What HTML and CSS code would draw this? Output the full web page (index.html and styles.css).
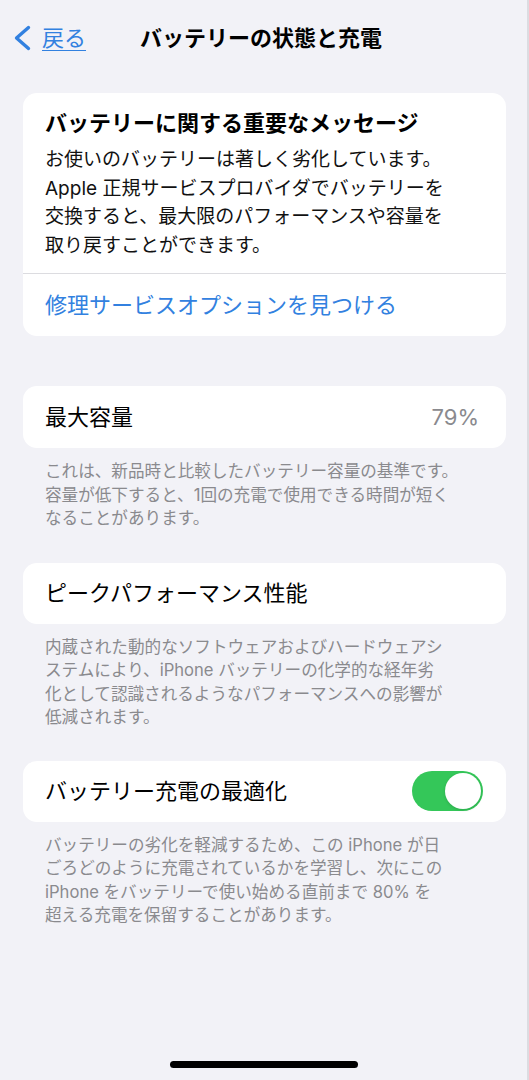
FILE: index.html
```html
<!DOCTYPE html>
<html lang="ja">
<head>
<meta charset="utf-8">
<title>バッテリーの状態と充電</title>
<link rel="stylesheet" href="styles.css">
</head>
<body>
<div class="screen">
  <header class="nav">
    <a class="back" href="#">
      <svg class="chev" viewBox="0 0 18 26" width="18" height="26" aria-hidden="true">
        <path d="M15.5 2.5 L3.5 13 L15.5 23.5" fill="none" stroke="currentColor" stroke-width="3.4" stroke-linecap="round" stroke-linejoin="round"/>
      </svg>
      <span class="back-text">戻る</span>
    </a>
    <h1 class="nav-title">バッテリーの状態と充電</h1>
  </header>

  <main class="content">
    <section class="card card-msg">
      <div class="msg-body">
        <h2 class="msg-title">バッテリーに関する重要なメッセージ</h2>
        <p class="msg-text">お使いのバッテリーは著しく劣化しています。<br>Apple 正規サービスプロバイダでバッテリーを<br>交換すると、最大限のパフォーマンスや容量を<br>取り戻すことができます。</p>
      </div>
      <div class="msg-link-row">
        <a class="msg-link" href="#">修理サービスオプションを見つける</a>
      </div>
    </section>

    <section class="card card-row card-first">
      <span class="row-label">最大容量</span>
      <span class="row-value">79%</span>
    </section>
    <p class="footnote">これは、新品時と比較したバッテリー容量の基準です。<br>容量が低下すると、1回の充電で使用できる時間が短く<br>なることがあります。</p>

    <section class="card card-row card-second">
      <span class="row-label">ピークパフォーマンス性能</span>
    </section>
    <p class="footnote">内蔵された動的なソフトウェアおよびハードウェアシ<br>ステムにより、iPhone バッテリーの化学的な経年劣<br>化として認識されるようなパフォーマンスへの影響が<br>低減されます。</p>

    <section class="card card-row card-third">
      <span class="row-label">バッテリー充電の最適化</span>
      <span class="toggle on" role="switch" aria-checked="true"><span class="knob"></span></span>
    </section>
    <p class="footnote">バッテリーの劣化を軽減するため、この iPhone が日<br>ごろどのように充電されているかを学習し、次にこの<br>iPhone をバッテリーで使い始める直前まで 80% を<br>超える充電を保留することがあります。</p>
  </main>

  <div class="home-indicator"></div>
</div>
</body>
</html>
```

FILE: styles.css
```css
* { box-sizing: border-box; }

html, body {
  margin: 0;
  padding: 0;
}

body {
  background: #f2f2f7;
  font-family: "Inter", "Noto Sans CJK JP", sans-serif;
  color: #000;
  -webkit-font-smoothing: antialiased;
}

.screen {
  position: relative;
  width: 529px;
  height: 1080px;
  overflow: hidden;
  background: #f2f2f7;
  box-shadow: inset -2px 0 0 #dcdce1;
}

/* Navigation bar */
.nav {
  display: flex;
  align-items: center;
  height: 48px;
  margin-top: 14px;
  padding-left: 13px;
}

.back {
  display: flex;
  align-items: center;
  gap: 11px;
  color: #3281e0;
  text-decoration: none;
}

.chev {
  display: block;
  color: #3281e0;
}

.back-text {
  font-size: 22px;
  line-height: 28px;
  text-decoration: underline;
  text-decoration-thickness: 1px;
  text-underline-offset: 4px;
}

.nav-title {
  margin: 0 0 0 54px;
  font-size: 22px;
  line-height: 28px;
  font-weight: 700;
  color: #000;
}

/* Content */
.content {
  padding: 0 23px 0 23px;
  display: flex;
  flex-direction: column;
}

.card {
  background: #fff;
  border-radius: 14px;
}

.card-msg {
  margin-top: 31px;
}

.msg-body {
  padding: 16px 22px 13px 22px;
  border-bottom: 1px solid #dcdce0;
}

.msg-title {
  margin: 0;
  font-size: 22px;
  line-height: 28px;
  font-weight: 700;
  white-space: nowrap;
}

.msg-text {
  margin: 9px 0 0 0;
  font-size: 19px;
  line-height: 28.5px;
  white-space: nowrap;
  color: #111;
}

.msg-link-row {
  height: 62px;
  display: flex;
  align-items: center;
  padding-left: 22px;
}

.msg-link {
  color: #3281e0;
  text-decoration: none;
  font-size: 22px;
  line-height: 28px;
}

.card-row {
  height: 61px;
  display: flex;
  align-items: center;
  justify-content: space-between;
  padding: 0 23px 0 22px;
}

.card-first { margin-top: 50px; height: 62px; }
.card-second { margin-top: 32px; }
.card-third { margin-top: 31px; }

.row-label {
  font-size: 22px;
  line-height: 28px;
  white-space: nowrap;
}

.row-value {
  font-size: 22px;
  line-height: 28px;
  color: #8a8a8e;
  padding-right: 4px;
}

.footnote {
  margin: 0;
  padding: 12px 0 0 22px;
  font-size: 16.6px;
  line-height: 23.5px;
  color: #8a8a8e;
  white-space: nowrap;
}

/* Toggle */
.toggle {
  position: relative;
  display: block;
  width: 71px;
  height: 40px;
  border-radius: 20px;
  background: #34c759;
}

.toggle .knob {
  position: absolute;
  top: 2px;
  right: 2px;
  width: 36px;
  height: 36px;
  border-radius: 50%;
  background: #fff;
  box-shadow: 0 1px 3px rgba(0, 0, 0, 0.15);
}

/* Home indicator (system overlay) */
.home-indicator {
  position: absolute;
  left: 170px;
  top: 1061px;
  width: 188px;
  height: 7px;
  border-radius: 4px;
  background: #000;
}
```
